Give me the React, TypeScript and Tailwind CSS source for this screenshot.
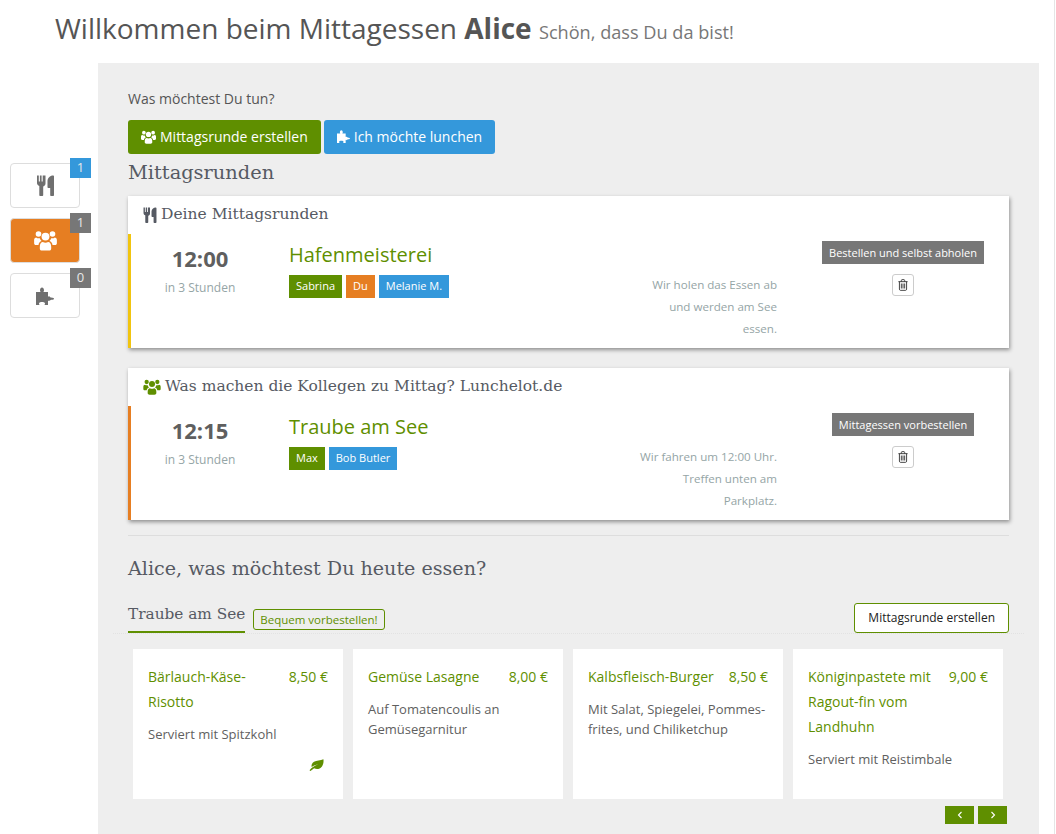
import React from 'react';

const sans = { fontFamily: '"Open Sans", sans-serif' };

const CutleryIcon = ({ className }: { className?: string }) => (
  <svg viewBox="0 0 17 21" className={className} fill="currentColor">
    <path d="M0 .5h1.800v6h1.100v-6h1.700v6h1.100v-6h2.800v8c0 1.500-.9 2.500-2.300 2.900V20c0 .6-.4 1-1 1H3.300c-.6 0-1-.4-1-1v-9.100C.9 10.500 0 9.500 0 8V.5z" />
    <path d="M10.500 6c0-3 2.500-5.500 5.500-5.500.6 0 1 .4 1 1V20c0 .6-.4 1-1 1h-1.800c-.6 0-1-.4-1-1v-7h-1.700c-.6 0-1-.4-1-1V6z" />
  </svg>
);

const UsersIcon = ({ className }: { className?: string }) => (
  <svg viewBox="0 0 26 24" className={className} fill="currentColor">
    <circle cx="5" cy="4.500" r="3.200" />
    <circle cx="21" cy="4.500" r="3.200" />
    <circle cx="13" cy="7.500" r="4.500" />
    <path d="M0 11.500c0-2 1-3 2.500-3 .9.800 2 1.200 4 1 .3 1.300 1 2.400 2 3.200-2 .6-3.200 2.300-3.500 4.300H2c-1.200 0-2-.7-2-2v-3.500z" />
    <path d="M26 11.500c0-2-1-3-2.500-3-.9.800-2 1.200-4 1-.3 1.300-1 2.400-2 3.200 2 .6 3.200 2.300 3.500 4.300H24c1.200 0 2-.7 2-2v-3.500z" />
    <path d="M6.500 19c0-3 1.500-5.200 3.500-5.200 1.800 1.100 4.200 1.100 6 0 2 0 3.500 2.200 3.500 5.200v2c0 1.700-1.200 2.500-2.800 2.500H9.300c-1.600 0-2.800-.8-2.800-2.500v-2z" />
  </svg>
);

const PuzzleIcon = ({ className }: { className?: string }) => (
  <svg viewBox="0 0 18 18" className={className} fill="currentColor">
    <path d="M0 5H4.700C4.200 4.500 4 4 4 3.200 4 1.700 4.900.5 6 .5S8 1.700 8 3.200C8 4 7.800 4.500 7.300 5H12V9.800C12.500 9.300 13 9.100 13.800 9.800 14.500 10.500 15 10.700 16 10.700S18 11 18 11.700 17 12.700 16 12.700 14.500 12.900 13.800 13.600C13 14.300 12.500 14.100 12 13.600V18H8.400C8.800 17.500 9 17 9 16.500 9 15.500 7.700 15 6 15S3 15.500 3 16.500C3 17 3.200 17.500 3.600 18H0Z" />
  </svg>
);

const TrashIcon = ({ className }: { className?: string }) => (
  <svg viewBox="0 0 12 14" className={className} fill="none" stroke="currentColor" strokeWidth="1.100">
    <path d="M.5 3h11M4 3V1.500c0-.5.300-.9.800-.9h2.400c.5 0 .8.400.8.900V3M1.700 3v9c0 .8.500 1.400 1.100 1.400h6.400c.6 0 1.100-.6 1.100-1.400V3" />
    <path d="M4 5.200v6M6 5.200v6M8 5.200v6" />
  </svg>
);

const LeafIcon = ({ className }: { className?: string }) => (
  <svg viewBox="0 0 16 13" className={className} fill="currentColor">
    <path d="M15.500.300c.5 3.500-.4 7-2.600 8.900-2.300 2-5.300 1.900-7.500.9C4.200 11 3 12 1.900 12.800c-.7.500-1.700-.3-1.200-1 .8-1 1.900-2 3.100-2.900 1.900-1.400 4-2.500 6.200-3.300-2.600.4-5.100 1.500-7.200 3-.6-2.200.3-4.300 2.500-5.500C7.800 1.500 12.500 2 15.500.300z" />
  </svg>
);

const NavTile = ({ count, active, badge, children }: { count: number; active?: boolean; badge: string; children: React.ReactNode }) => (
  <div className="relative w-[70px]">
    <div className={`h-[45px] rounded-[4px] border border-[#dddddd] flex items-center justify-center ${active ? 'bg-[#e67e22] text-white' : 'bg-white text-[#6f6f6f]'}`}>
      {children}
    </div>
    <span className={`absolute -top-[5px] -right-[11px] w-[21px] h-[20px] flex items-center justify-center text-[13px] text-[#e8e8e8] ${badge}`}>{count}</span>
  </div>
);

const Tag = ({ label, color }: { label: string; color: string }) => (
  <span className={`h-[23px] px-[7px] flex items-center text-[11px] text-white ${color}`}>{label}</span>
);

interface LunchRow {
  time: string;
  place: string;
  accent: string;
  tags: { label: string; color: string }[];
  note: string[];
  action: string;
}

const LunchCard = ({ icon, title, row }: { icon: React.ReactNode; title: string; row: LunchRow }) => (
  <div className="bg-white shadow-[1px_2px_4px_rgba(0,0,0,0.4)] h-[152px] flex flex-col">
    <div className="h-[38px] pl-[15px] flex items-center gap-[4px] text-[#565a63]">
      {icon}
      <span className="font-['DejaVu_Serif',serif] text-[15.500px]">{title}</span>
    </div>
    <div className={`flex-1 flex border-l-[3px] ${row.accent}`}>
      <div className="w-[138px] pt-[9px] text-center">
        <div className="text-[22px] font-bold text-[#5f5f5f] leading-[30px]">{row.time}</div>
        <div className="text-[12px] text-[#95a5a6] mt-[6px]">in 3 Stunden</div>
      </div>
      <div className="ml-[20px] flex-1 pt-[4px]">
        <div className="text-[20px] text-[#5f8f00] leading-[34px]">{row.place}</div>
        <div className="flex gap-[4px] mt-[3px]">
          {row.tags.map((t) => <Tag key={t.label} label={t.label} color={t.color} />)}
        </div>
      </div>
      <div className="w-[200px] pt-[40px] text-right text-[11.600px] leading-[22px] text-[#95a5a6]">
        {row.note.map((n) => <div key={n}>{n}</div>)}
      </div>
      <div className="w-[232px] pl-[20px] pt-[7px] flex flex-col items-center">
        <span className="h-[23px] px-[7px] pt-[1px] flex items-center bg-[#777777] text-white text-[11px]">{row.action}</span>
        <span className="mt-[10px] w-[22px] h-[22px] rounded-[3px] border border-[#cccccc] bg-white flex items-center justify-center text-[#333333]">
          <TrashIcon className="w-[10px] h-[12px]" />
        </span>
      </div>
    </div>
  </div>
);

const dishes = [
  { name: 'Bärlauch-Käse-Risotto', price: '8,50 €', text: 'Serviert mit Spitzkohl', veg: true },
  { name: 'Gemüse Lasagne', price: '8,00 €', text: 'Auf Tomatencoulis an Gemüsegarnitur' },
  { name: 'Kalbsfleisch-Burger', price: '8,50 €', text: 'Mit Salat, Spiegelei, Pommes-frites, und Chiliketchup' },
  { name: 'Königinpastete mit Ragout-fin vom Landhuhn', price: '9,00 €', text: 'Serviert mit Reistimbale' },
];

export default function App() {
  return (
    <div style={sans} className="h-[834px] w-[1056px] overflow-hidden bg-white text-[#555555] relative">
      <div className="flex h-full w-[1055px] border-r border-[#e5e5e5]">
        <div className="flex-1 flex flex-col">
          <h1 className="pl-[55px] h-[63px] pt-[8px] text-[28px] leading-[40px] text-[#555555]">
            Willkommen beim Mittagessen <b className="font-bold">Alice</b> <small className="text-[18.150px] text-[#777777]">Schön, dass Du da bist!</small>
          </h1>
          <div className="flex flex-1 min-h-0">
            <div className="w-[98px] pl-[10px] pt-[100px] flex flex-col gap-[10px]">
              <NavTile count={1} badge="bg-[#3498db]"><CutleryIcon className="w-[17px] h-[21px]" /></NavTile>
              <NavTile count={1} active badge="bg-[#777777]"><UsersIcon className="w-[23px] h-[21px]" /></NavTile>
              <NavTile count={0} badge="bg-[#777777]"><PuzzleIcon className="w-[18px] h-[18px]" /></NavTile>
            </div>
            <main className="w-[941px] bg-[#eeeeee] pl-[30px] pr-[30px] pt-[27px]">
              <p className="text-[14px] leading-[18px] text-[#555555]">Was möchtest Du tun?</p>
              <div className="flex gap-[3px] mt-[12px]">
                <button className="h-[34px] px-[13px] pb-[1px] rounded-[3px] bg-[#5f8f00] text-white text-[14px] flex items-center gap-[4px]"><UsersIcon className="w-[15px] h-[14px]" />Mittagsrunde erstellen</button>
                <button className="h-[34px] px-[13px] pb-[1px] rounded-[3px] bg-[#3498db] text-white text-[14px] flex items-center gap-[4px]"><PuzzleIcon className="w-[13px] h-[13px]" />Ich möchte lunchen</button>
              </div>
              <h2 className="font-['DejaVu_Serif',serif] text-[19.400px] leading-[24px] text-[#565a63] mt-[7px]">Mittagsrunden</h2>
              <div className="mt-[11px] flex flex-col gap-[20px]">
                <LunchCard
                  icon={<CutleryIcon className="w-[14px] h-[16px] text-[#565a63]" />}
                  title="Deine Mittagsrunden"
                  row={{
                    time: '12:00', place: 'Hafenmeisterei', accent: 'border-[#f1c40f]',
                    tags: [
                      { label: 'Sabrina', color: 'bg-[#5f8f00]' },
                      { label: 'Du', color: 'bg-[#e67e22]' },
                      { label: 'Melanie M.', color: 'bg-[#3498db]' },
                    ],
                    note: ['Wir holen das Essen ab', 'und werden am See', 'essen.'],
                    action: 'Bestellen und selbst abholen',
                  }}
                />
                <LunchCard
                  icon={<UsersIcon className="w-[18px] h-[16px] text-[#5f8f00]" />}
                  title="Was machen die Kollegen zu Mittag? Lunchelot.de"
                  row={{
                    time: '12:15', place: 'Traube am See', accent: 'border-[#e67e22]',
                    tags: [
                      { label: 'Max', color: 'bg-[#5f8f00]' },
                      { label: 'Bob Butler', color: 'bg-[#3498db]' },
                    ],
                    note: ['Wir fahren um 12:00 Uhr.', 'Treffen unten am', 'Parkplatz.'],
                    action: 'Mittagessen vorbestellen',
                  }}
                />
              </div>
              <hr className="mt-[15px] border-[#dddddd]" />
              <h2 className="font-['DejaVu_Serif',serif] text-[19.100px] leading-[24px] text-[#565a63] mt-[21px]">Alice, was möchtest Du heute essen?</h2>
              <div className="mt-[21px] flex items-end border-b border-dotted border-[#e2e2e2] -mx-[15px] px-[15px] h-[32px]">
                <div className="border-b-2 border-[#5f8f00] h-[30px] font-['DejaVu_Serif',serif] text-[15.300px] text-[#565a63]">Traube am See</div>
                <span className="ml-[8px] mb-[3px] h-[21px] px-[6px] rounded-[3px] border border-[#5f8f00] text-[11.500px] text-[#5f8f00] flex items-center">Bequem vorbestellen!</span>
                <button className="ml-auto h-[30px] px-[13px] rounded-[3px] border border-[#5f8f00] bg-white text-[12px] text-[#222222]">Mittagsrunde erstellen</button>
              </div>
              <div className="grid grid-cols-4 gap-[10px] mt-[15px] pl-[5px] pr-[6px]">
                {dishes.map((d) => (
                  <div key={d.name} className="relative bg-white h-[150px] p-[15px]">
                    <div className="flex justify-between gap-[10px] text-[14px] leading-[25px] text-[#5f8f00]">
                      <span>{d.name}</span><span className="shrink-0">{d.price}</span>
                    </div>
                    <p className="text-[13px] leading-[20px] text-[#5f5f5f] mt-[10px]">{d.text}</p>
                    {d.veg && <LeafIcon className="absolute right-[19px] bottom-[28px] w-[15px] h-[12px] text-[#5f8f00]" />}
                  </div>
                ))}
              </div>
              <div className="flex justify-end gap-[4px] mt-[7px] pr-[2px]">
                <button className="w-[29px] h-[18px] bg-[#5f8f00] text-white flex items-center justify-center"><svg viewBox="0 0 8 10" className="w-[6px] h-[8px]" fill="none" stroke="currentColor" strokeWidth="1.500"><path d="M6 1 2 5l4 4" /></svg></button>
                <button className="w-[29px] h-[18px] bg-[#5f8f00] text-white flex items-center justify-center"><svg viewBox="0 0 8 10" className="w-[6px] h-[8px]" fill="none" stroke="currentColor" strokeWidth="1.500"><path d="m2 1 4 4-4 4" /></svg></button>
              </div>
            </main>
          </div>
        </div>
      </div>
    </div>
  );
}
